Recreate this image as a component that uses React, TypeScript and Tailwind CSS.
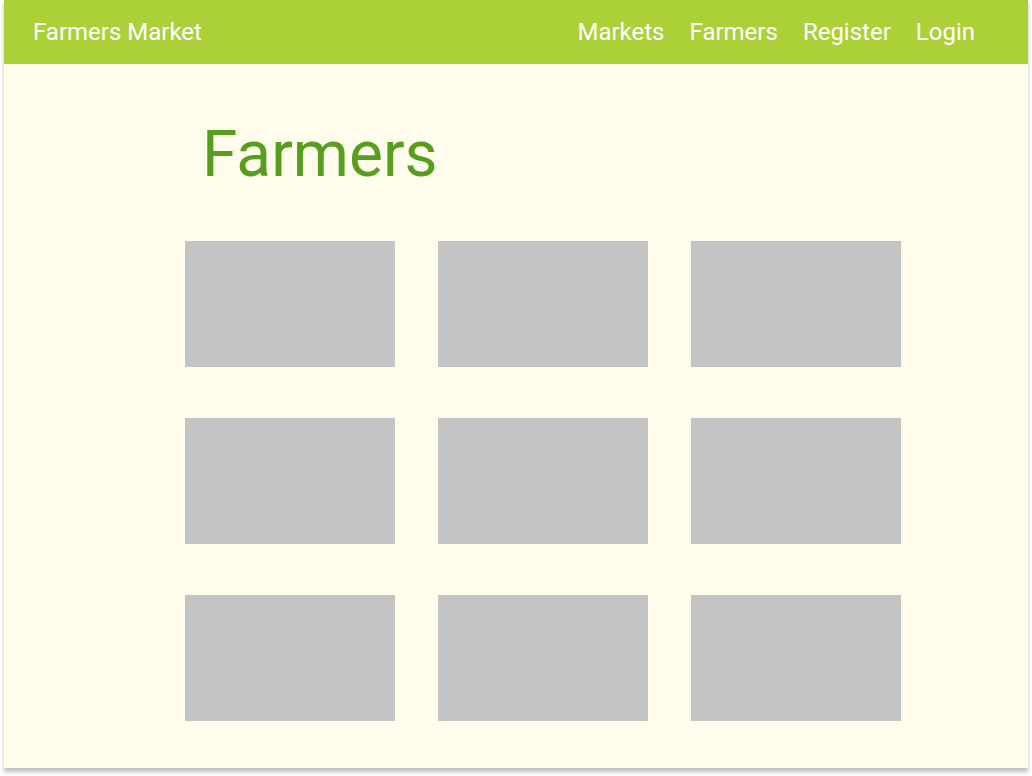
export default function App() {
  const boxes = Array.from({ length: 9 });
  return (
    <div className="w-[1032px] h-[776px] bg-white pl-[4px]" style={{ fontFamily: "Roboto, 'Noto Sans', sans-serif" }}>
      <div className="w-[1024px] h-[768px] bg-[#fffcec] shadow-[0_4px_4px_rgba(0,0,0,0.25)] flex flex-col">
        <header className="h-[64px] bg-[#acd037] flex items-center justify-between pl-[29px] pr-[53px] text-white text-[24px] leading-[28px]">
          <div>Farmers Market</div>
          <nav className="flex gap-[25px]">
            <span>Markets</span>
            <span>Farmers</span>
            <span>Register</span>
            <span>Login</span>
          </nav>
        </header>
        <h1 className="mt-[59px] ml-[198px] text-[64px] leading-[64px] text-[#569f1e]">Farmers</h1>
        <div className="mt-[54px] ml-[181px] grid grid-cols-[210px_210px_210px] gap-x-[43px] gap-y-[51px]">
          {boxes.map((_, i) => (
            <div key={i} className="h-[126px] bg-[#c4c4c4]" />
          ))}
        </div>
      </div>
    </div>
  );
}
